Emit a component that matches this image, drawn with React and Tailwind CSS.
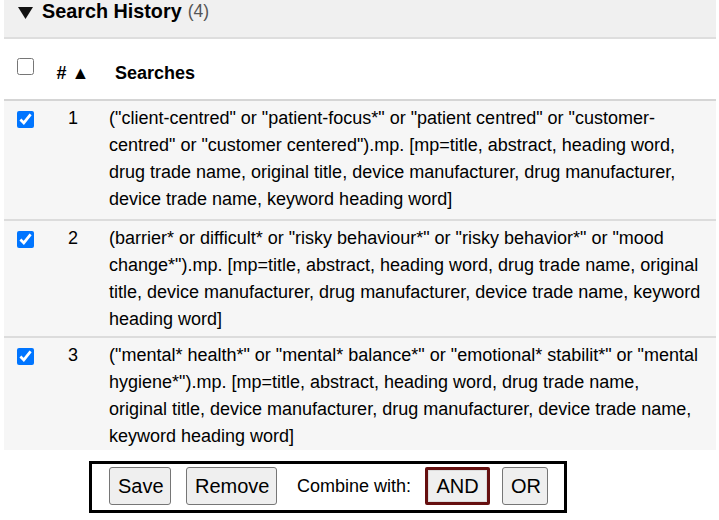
import React from "react";

const rows = [
  {
    n: 1,
    lines: [
      '("client-centred" or "patient-focus*" or "patient centred" or "customer-',
      'centred" or "customer centered").mp. [mp=title, abstract, heading word,',
      "drug trade name, original title, device manufacturer, drug manufacturer,",
      "device trade name, keyword heading word]",
    ],
    cls: "border-b-2 border-[#dcdcdc] pb-[6px]",
  },
  {
    n: 2,
    lines: [
      '(barrier* or difficult* or "risky behaviour*" or "risky behavior*" or "mood',
      'change*").mp. [mp=title, abstract, heading word, drug trade name, original',
      "title, device manufacturer, drug manufacturer, device trade name, keyword",
      "heading word]",
    ],
    cls: "border-b-2 border-[#dcdcdc] pb-[3px]",
  },
  {
    n: 3,
    lines: [
      '("mental* health*" or "mental* balance*" or "emotional* stabilit*" or "mental',
      'hygiene*").mp. [mp=title, abstract, heading word, drug trade name,',
      "original title, device manufacturer, drug manufacturer, device trade name,",
      "keyword heading word]",
    ],
    cls: "pb-0",
  },
];

function Btn({ children, className = "" }) {
  return (
    <button
      className={
        "h-[38px] rounded-[3px] border border-[#767676] bg-[#efefef] px-[8px] text-[20px] leading-none text-black " +
        className
      }
    >
      {children}
    </button>
  );
}

export default function App() {
  return (
    <div className="relative h-[520px] w-[719px] overflow-hidden bg-white font-['Liberation_Sans',Arial,sans-serif] text-black">
      <div className="mx-[4px] w-[712px]">
        {/* Section header */}
        <div className="flex h-[39px] items-start border-b-2 border-[#dedede] bg-[#f0f0f0] pl-[14px]">
          <svg width="15" height="12" viewBox="0 0 15 12" className="mt-[7px]">
            <polygon points="0,0 15,0 7.5,12" fill="#111" />
          </svg>
          <span className="ml-[9px] mt-[-1px] text-[19.8px] font-bold leading-[24px]">Search History</span>
          <span className="ml-[6px] mt-[-1px] text-[17.6px] leading-[24px] text-[#555]">(4)</span>
        </div>

        {/* Table header */}
        <div className="flex h-[62px] border-b-2 border-[#d5d5d5] bg-white">
          <div className="w-[41px] pl-[13px] pt-[19px]">
            <input type="checkbox" className="m-0 block h-[17px] w-[17px]" />
          </div>
          <div className="w-[56px] pt-[21px] text-center text-[18px] font-bold leading-[27px]">
            # ▲
          </div>
          <div className="pl-[14px] pt-[21px] text-[18px] font-bold leading-[27px]">Searches</div>
        </div>

        {/* Rows */}
        {rows.map((r) => (
          <div key={r.n} className={"flex bg-[#f6f6f6] pt-[4px] " + r.cls}>
            <div className="w-[41px] pl-[13px] pt-[6px]">
              <input type="checkbox" defaultChecked className="m-0 block h-[17px] w-[17px]" />
            </div>
            <div className="w-[56px] text-center text-[18px] leading-[27px]">{r.n}</div>
            <div className="pl-[8px] text-[18px] leading-[27px]">
              {r.lines.map((l, k) => (
                <div key={k} className="whitespace-nowrap">
                  {l}
                </div>
              ))}
            </div>
          </div>
        ))}
      </div>

      {/* Action bar */}
      <div className="ml-[89px] mt-[11px] flex h-[52px] w-[478px] items-start border-[3px] border-black pl-[17px] pt-[3px]">
        <Btn className="w-[62px]">Save</Btn>
        <Btn className="ml-[15px] w-[91px]">Remove</Btn>
        <span className="ml-[20px] mt-[8px] text-[18px] leading-[22px]">Combine with:</span>
        <button className="ml-[14px] h-[38px] w-[65px] rounded-[2px] border-[3px] border-[#650f0f] bg-[#efefef] text-[20px] leading-none text-black shadow-[inset_0_0_0_1px_#dcdcdc]">
          AND
        </button>
        <Btn className="ml-[12px] w-[46px]">OR</Btn>
      </div>
    </div>
  );
}
